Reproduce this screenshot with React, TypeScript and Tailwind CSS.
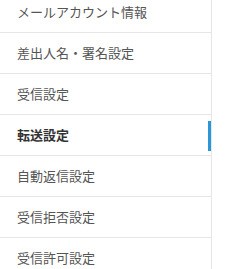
import React from "react";

const items = [
  "メールアカウント情報",
  "差出人名・署名設定",
  "受信設定",
  "転送設定",
  "自動返信設定",
  "受信拒否設定",
  "受信許可設定",
];

const active = "転送設定";

export default function App() {
  return (
    <div
      className="h-[269px] w-[227px] overflow-hidden bg-white"
      style={{ fontFamily: '"Noto Sans CJK JP", "Noto Sans", sans-serif' }}
    >
      <ul className="-mt-[8px] w-[212px] border-r border-[#e6e6e6]">
        {items.map((label) => {
          const isActive = label === active;
          return (
            <li
              key={label}
              className="relative flex h-[41px] items-center border-b border-[#e6e6e6] pl-[17px]"
            >
              <span
                className={
                  isActive
                    ? "text-[13px] font-bold text-[#333]"
                    : "text-[13px] text-[#555]"
                }
              >
                {label}
              </span>
              {isActive && (
                <span className="absolute right-0 top-[6px] h-[30px] w-[3px] bg-[#2b96d8]" />
              )}
            </li>
          );
        })}
      </ul>
    </div>
  );
}
